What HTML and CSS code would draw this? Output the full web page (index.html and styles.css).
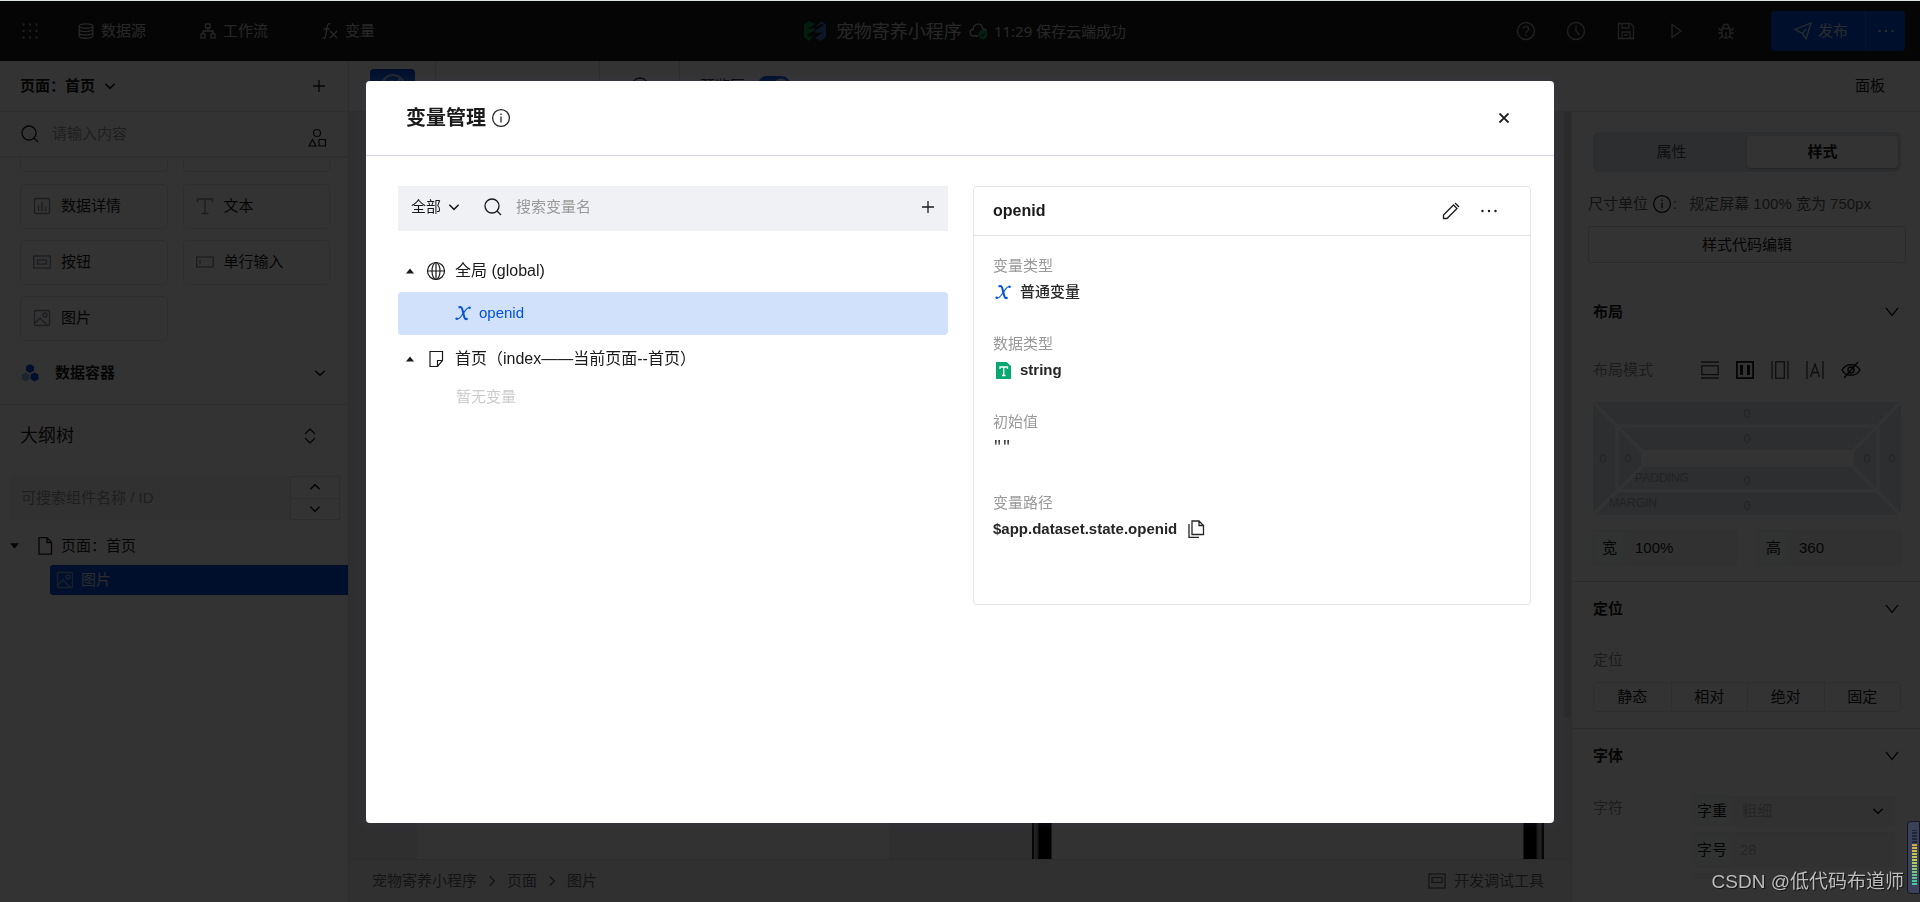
FILE: index.html
```html
<!DOCTYPE html>
<html lang="zh-CN">
<head>
<meta charset="utf-8">
<title>宠物寄养小程序 - 变量管理</title>
<link rel="stylesheet" href="styles.css">
</head>
<body>
<svg class="defs" width="0" height="0" aria-hidden="true">
  <symbol id="chev" viewBox="0 0 12 12"><path d="M2 4l4 4 4-4"/></symbol>
  <symbol id="wide-chev" viewBox="0 0 18 18"><path d="M3 5l6 7.500L15 5"/></symbol>
  <symbol id="plus" viewBox="0 0 14 14"><path d="M7 1v12M1 7h12"/></symbol>
  <symbol id="search" viewBox="0 0 18 18"><circle cx="8" cy="8" r="7"/><path d="M13 13l4 4"/></symbol>
  <symbol id="info" viewBox="0 0 20 20"><circle cx="10" cy="10" r="8.4"/><path d="M10 8.500v6M10 5.500v1.600"/></symbol>
  <symbol id="image" viewBox="0 0 18 18"><rect x="1.5" y="1.5" width="15" height="15" rx="1"/><circle cx="12" cy="6" r="2"/><path d="M2 14l5-5 7 7"/></symbol>
  <symbol id="varx" viewBox="0 0 18 18"><path d="M4.500 3.500C6.500 2.600 7.600 3 8.300 5.200L10.300 13c.6 2.400 1.600 2.800 3.200 1.200" stroke-width="2"/><path d="M16 3.600C14 3 13 3.800 11 6.800L7 12.500C5 15.200 4 15.600 2 14.800" stroke-width="1.200"/><circle cx="15.600" cy="3.800" r="1.200" fill="currentColor" stroke="none"/><circle cx="2.600" cy="14.600" r="1.200" fill="currentColor" stroke="none"/></symbol>
</svg>

<div class="app">
  <header class="topbar">
    <nav class="nav">
      <button class="nav-apps" aria-label="应用"><svg class="i18 dots" viewBox="0 0 18 18"><path d="M2.500 2.500h0M9 2.500h0M15.500 2.500h0M2.500 9h0M9 9h0M15.500 9h0M2.500 15.500h0M9 15.500h0M15.500 15.500h0"/></svg></button>
      <button class="nav-item"><svg class="i16" viewBox="0 0 16 16"><ellipse cx="8" cy="3" rx="6.800" ry="2.200"/><path d="M1.200 3v10c0 3 13.600 3 13.600 0V3M1.200 6.300c0 3 13.600 3 13.600 0M1.200 9.700c0 3 13.600 3 13.600 0"/></svg>数据源</button>
      <button class="nav-item"><svg class="i16" viewBox="0 0 16 16"><rect x="5.500" y="1" width="4.500" height="4"/><rect x="1" y="11" width="4" height="4"/><rect x="11" y="11" width="4" height="4"/><path d="M8 5v3M3 11V8h10v3"/></svg>工作流</button>
      <button class="nav-item"><svg class="i16" viewBox="0 0 16 16"><path d="M8.500 1C6.500 0 5.500 1.500 5.200 3.500L3.600 13c-.3 2-1.300 2.500-3 2M1.500 6h6M8 8l7 7M15 8l-7 7"/></svg>变量</button>
    </nav>
    <div class="project">
      <svg class="logo" viewBox="0 0 24 20"><path fill="#0a8f52" d="M1 4l5-4 6 3-8 5 7-1 1 2-8 5 2 2 5-2-5 6-5-4z"/><path fill="#3c6fc4" d="M23 4l-4-4-7 6 7-3 2 1-9 6 1 2 7-1-8 6 6 3 5-4z"/></svg>
      <span class="project-name">宠物寄养小程序</span>
      <svg class="cloud" viewBox="0 0 19 17"><path d="M9 13H5C0 13 0 7 4 6.500 5-.5 13-.5 14 6c2 0 3 1 3.500 2"/><circle cx="14" cy="11.500" r="4.500" fill="#0aa562" stroke="none"/><path d="M12 11.500l1.500 1.500 2.500-3" stroke="#111"/></svg>
      <span class="save-state">11:29 保存云端成功</span>
    </div>
    <div class="tools">
      <button aria-label="帮助"><svg class="i20" viewBox="0 0 20 20"><circle cx="10" cy="10" r="8.500"/><path d="M7.300 8c0-3.600 5.400-3.600 5.400 0 0 2-2.700 2-2.700 4M10 13.500v1.500"/></svg></button>
      <button aria-label="历史"><svg class="i20" viewBox="0 0 20 20"><circle cx="10" cy="10" r="8.500"/><path d="M10 4.500V10l3.500 4"/></svg></button>
      <button aria-label="保存"><svg class="i20" viewBox="0 0 20 20"><path d="M2.500 2.500h12l3 3v12h-15zM6 2.500v4.500h7V2.500M6 17.500V11h8v6.500M8 14h4"/></svg></button>
      <button aria-label="预览"><svg class="i20" viewBox="0 0 20 20"><path d="M6 3.500v13l9-6.500z"/></svg></button>
      <button aria-label="调试"><svg class="i20" viewBox="0 0 20 20"><path d="M6 7.500h8V13c0 5.500-8 5.500-8 0zM7 7c0-5 6-5 6 0M10 11v6M6 9H4L2.500 6.500M14 9h2l1.500-2.500M6 12H2M14 12h4M6.500 15L3 18M13.500 15l3.500 3"/></svg></button>
      <div class="publish">
        <button class="publish-main"><svg class="i18" viewBox="0 0 18 18"><path d="M1 7.500L17 1l-5 16-3.500-5.500zM8.500 11.500L12 7"/></svg>发布</button>
        <button class="publish-more" aria-label="更多"><svg class="i18 dots" viewBox="0 0 18 18"><path d="M2.500 9h0M9 9h0M15.500 9h0"/></svg></button>
      </div>
    </div>
  </header>

  <div class="main">
    <aside class="left">
      <div class="page-head"><button class="page-pick">页面：首页<svg class="i14"><use href="#chev"/></svg></button><button class="push" aria-label="新建页面"><svg class="i14"><use href="#plus"/></svg></button></div>
      <div class="comp-search">
        <svg class="i18"><use href="#search"/></svg>
        <input type="text" placeholder="请输入内容" aria-label="搜索组件">
        <svg class="i20 shapes" viewBox="0 0 20 20"><circle cx="10" cy="5" r="3.500"/><path d="M2 18l3.500-6.500L9 18zM12 11.500h6.500V18H12z"/></svg>
      </div>
      <div class="comp-list">
        <div class="comp-grid cut"><span></span><span></span></div>
        <div class="comp-grid">
          <button class="comp"><svg class="i18" viewBox="0 0 18 18"><rect x="1.500" y="1.500" width="15" height="15" rx="1"/><path d="M5.500 8v6M9 5v9M12.500 10v4"/></svg>数据详情</button>
          <button class="comp"><svg class="i18" viewBox="0 0 18 18"><path d="M1.500 5V2h15v3M9 2v14.500M5.500 16.500h7"/></svg>文本</button>
          <button class="comp"><svg class="i18" viewBox="0 0 18 18"><rect x=".7" y="3" width="16.600" height="12"/><rect x="4.500" y="7" width="9" height="4"/></svg>按钮</button>
          <button class="comp"><svg class="i18" viewBox="0 0 18 18"><rect x=".7" y="4" width="16.600" height="10"/><path d="M4 6.500v5"/></svg>单行输入</button>
          <button class="comp"><svg class="i18"><use href="#image"/></svg>图片</button>
        </div>
        <button class="comp-group"><svg class="i18" viewBox="0 0 18 18"><path fill="#0052d9" stroke="none" d="M9 0l4 2.300v4.400L9 9 5 6.700V2.300zM13.500 8.500l4 2v4.500l-4 2.500-4-2.500v-4.500z"/><path fill="#9db4dd" stroke="none" d="M4.500 8.500l4 2v4.500l-4 2.500-4-2.500v-4.500z"/></svg>数据容器<svg class="i14 push"><use href="#chev"/></svg></button>
      </div>
      <div class="outline">
        <div class="outline-head"><h2>大纲树</h2><button aria-label="展开收起"><svg class="i18" viewBox="0 0 18 18"><path d="M4 7l5-5 5 5M4 11l5 5 5-5"/></svg></button></div>
        <div class="outline-search">
          <input type="text" placeholder="可搜索组件名称 / ID" aria-label="搜索大纲树">
          <div class="steps"><button aria-label="上一个"><svg class="i14 up"><use href="#chev"/></svg></button><button aria-label="下一个"><svg class="i14"><use href="#chev"/></svg></button></div>
        </div>
        <div class="outline-page"><svg class="caret" viewBox="0 0 10 6"><path d="M0 0h10L5 6z"/></svg><svg class="i18" viewBox="0 0 18 18"><path d="M3 .7h8l4.500 4.500v12H3zM11 1v4.500h4"/></svg>页面：首页</div>
        <div class="outline-node"><svg class="i18"><use href="#image"/></svg>图片</div>
      </div>
    </aside>

    <div class="right-side">
      <div class="toolbar">
        <button class="tool-eye" aria-label="视图"><svg viewBox="0 0 26 26"><circle cx="13" cy="13" r="11"/><path d="M13 8a5 5 0 1 0 5 5M13 13l7-7"/></svg></button>
        <div class="tool-cell device">iPhone 8 100%</div>
        <div class="tool-cell ring"><svg class="i18" viewBox="0 0 18 18"><circle cx="9" cy="9" r="8"/></svg></div>
        <div class="preview"><label for="pv">预览区</label><input class="switch" type="checkbox" id="pv" checked></div>
        <button class="panel-btn">面板</button>
      </div>
      <div class="work">
        <div class="stage">
          <div class="canvas"><div class="artboard"></div><div class="phone"></div><div class="scroll-thumb"></div></div>
          <footer class="crumbs">
            <a href="#">宠物寄养小程序</a><svg class="i14 side"><use href="#chev"/></svg><a href="#">页面</a><svg class="i14 side"><use href="#chev"/></svg><a href="#">图片</a>
            <button class="dev"><svg class="i18" viewBox="0 0 18 18"><rect x="1" y="2" width="16" height="14"/><rect x="4" y="5.500" width="10" height="5"/></svg>开发调试工具</button>
          </footer>
        </div>

        <aside class="props">
          <div class="group first">
            <div class="tabs"><button>属性</button><button class="on">样式</button></div>
            <div class="unit"><span>尺寸单位</span><svg class="i20"><use href="#info"/></svg><span>:</span><span class="unit-text">规定屏幕 100% 宽为 750px</span></div>
            <button class="code-btn">样式代码编辑</button>
          </div>
          <section class="group layout">
            <h3>布局<svg class="i18"><use href="#wide-chev"/></svg></h3>
            <div class="modes"><span>布局模式</span>
              <svg class="i18" viewBox="0 0 18 18"><path d="M0 1h18M0 17h18"/><rect x=".8" y="4.800" width="16.400" height="8.800"/></svg>
              <svg class="i18 strong" viewBox="0 0 18 18"><rect x=".8" y=".8" width="16.400" height="16.400"/><path stroke-width="3" d="M5.500 4v10M12.500 4v10"/></svg>
              <svg class="i18" viewBox="0 0 18 18"><path d="M1 0v18M17 0v18"/><rect x="4.700" y=".8" width="8.600" height="16.400"/></svg>
              <svg class="i18" viewBox="0 0 18 18"><path d="M1 0v18M17 0v18M4.500 16L9 3l4.500 13M6 11.500h6"/></svg>
              <svg class="i20 hide-eye" viewBox="0 0 20 20"><path d="M1 10c4-7 14-7 18 0-4 7-14 7-18 0zM17 2L3 18"/><circle cx="10" cy="10" r="3"/></svg>
            </div>
            <svg class="box-model" viewBox="0 0 308 113" role="img" aria-label="外边距与内边距">
              <path class="zone" d="M0 0H308V113H0z"/>
              <path class="core" d="M48 48H261V65H48z"/>
              <path class="seam" d="M0 0L49 49M308 0L260 49M0 113L49 65M308 113L260 65M24 24H285V89H24z"/>
              <text x="154" y="16">0</text><text x="154" y="41">0</text><text x="154" y="83">0</text><text x="154" y="108">0</text>
              <text x="10" y="61">0</text><text x="35" y="61">0</text><text x="274" y="61">0</text><text x="299" y="61">0</text>
              <text x="69" y="80">PADDING</text><text x="40" y="105">MARGIN</text>
            </svg>
            <div class="sizes">
              <div class="field"><label for="w">宽</label><input id="w" type="text" value="100%"></div>
              <div class="field"><label for="h">高</label><input id="h" type="text" value="360"></div>
            </div>
          </section>
          <section class="group">
            <h3>定位<svg class="i18"><use href="#wide-chev"/></svg></h3>
            <div class="sub">定位</div>
            <div class="choices"><button>静态</button><button>相对</button><button>绝对</button><button>固定</button></div>
          </section>
          <section class="group">
            <h3>字体<svg class="i18"><use href="#wide-chev"/></svg></h3>
            <div class="font-row"><span>字符</span>
              <div class="font-fields">
                <div class="field short"><label for="fw">字重</label><select id="fw"><option>粗细</option></select><svg class="i14"><use href="#chev"/></svg></div>
                <div class="field"><label for="fs">字号</label><input id="fs" type="text" placeholder="28"></div>
                <div class="field rest"></div>
              </div>
            </div>
          </section>
        </aside>
      </div>
    </div>
  </div>
</div>

<div class="mask">
  <div class="modal" role="dialog" aria-labelledby="mt">
    <div class="modal-head"><h1 id="mt">变量管理</h1><svg class="i20"><use href="#info"/></svg><button class="push" aria-label="关闭"><svg class="i14 bold" viewBox="0 0 14 14"><path d="M2.500 2.500l9 9M11.500 2.500l-9 9"/></svg></button></div>
    <div class="modal-body">
      <div class="vars">
        <div class="var-search">
          <select aria-label="范围"><option>全部</option></select><svg class="i14"><use href="#chev"/></svg>
          <svg class="i18 glass"><use href="#search"/></svg>
          <input type="text" placeholder="搜索变量名" aria-label="搜索变量名">
          <button aria-label="新建变量"><svg class="i14"><use href="#plus"/></svg></button>
        </div>
        <div class="scope"><svg class="caret" viewBox="0 0 10 6"><path d="M0 6h10L5 0z"/></svg><svg class="i20" viewBox="0 0 20 20"><circle cx="10" cy="10" r="8.500"/><ellipse cx="10" cy="10" rx="4" ry="8.500"/><path d="M10 1.500v17M1.500 10h17"/></svg><span>全局 (global)</span></div>
        <div class="var on"><svg class="i18"><use href="#varx"/></svg>openid</div>
        <div class="scope"><svg class="caret" viewBox="0 0 10 6"><path d="M0 6h10L5 0z"/></svg><svg class="i20" viewBox="0 0 20 20"><path d="M4 2.500h12.500v9l-5 6H4zM16 11.500h-4.500v5.500"/></svg><span>首页（index——当前页面--首页）</span></div>
        <div class="none">暂无变量</div>
      </div>
      <div class="detail">
        <div class="detail-head"><h2>openid</h2>
          <button aria-label="编辑"><svg class="i18" viewBox="0 0 18 18"><path d="M1.500 16.500v-3.500L11.500 3l3.500 3.500L5 16.500zM13 1l4 4"/></svg></button>
          <button aria-label="更多"><svg class="i18 dots" viewBox="0 0 18 18"><path d="M2.500 9h0M9 9h0M15.500 9h0"/></svg></button>
        </div>
        <dl class="facts">
          <dt>变量类型</dt><dd><svg class="i18 blue"><use href="#varx"/></svg>普通变量</dd>
          <dt>数据类型</dt><dd class="strong-text"><svg class="i18" viewBox="0 0 18 18"><path fill="#07a872" stroke="none" d="M2 1h10.500L17 5v13H2z"/><path stroke="#fff" d="M6 8V6h7.500v2M9.750 6v8.500M8 14.500h3.500"/></svg>string</dd>
          <dt>初始值</dt><dd class="raw">""</dd>
          <dt>变量路径</dt><dd class="strong-text">$app.dataset.state.openid<button aria-label="复制"><svg class="i18" viewBox="0 0 18 18"><path d="M5 1h7l4.500 4.500V14.500H5zM12 1v4.500h4M2 4v13.500h10"/></svg></button></dd>
        </dl>
      </div>
    </div>
  </div>
</div>
<div class="watermark">CSDN @低代码布道师</div>
<div class="meter"><span></span></div>
</body>
</html>
```

FILE: styles.css
```css
* { box-sizing: border-box; }
body {
  margin: 0;
  font: 15px/24px "Liberation Sans", "Noto Sans CJK SC", sans-serif;
  color: #1a1a1a;
  background: #fff;
}
h1, h2, h3, dl, dd { margin: 0; }
button, input, select {
  font: inherit;
  color: inherit;
  background: none;
  border: 0;
  padding: 0;
  margin: 0;
  min-width: 0;
}
button { display: flex; align-items: center; }
a { color: inherit; text-decoration: none; }
select { appearance: none; opacity: 1; }
input::placeholder { color: #999; opacity: 1; }
svg { flex: none; fill: none; stroke: currentColor; stroke-width: 1.3; }
.defs { position: absolute; }
.i14 { width: 14px; height: 14px; }
.i16 { width: 16px; height: 16px; }
.i18 { width: 18px; height: 18px; }
.i20 { width: 20px; height: 20px; }
.bold { stroke-width: 1.8; }
.dots { stroke-width: 2.4; stroke-linecap: round; }
.up { transform: rotate(180deg); }
.side { transform: rotate(-90deg); }
.push { margin-left: auto; }
.caret { width: 9px; height: 6px; fill: currentColor; stroke: none; }

.app {
  display: flex;
  flex-direction: column;
  height: 100vh;
  border-top: 1px solid #dfe6e2;
  overflow: hidden;
}

/* top bar */
.topbar {
  display: grid;
  grid-template-columns: 1fr auto 1fr;
  align-items: center;
  flex: none;
  height: 60px;
  padding: 0 15px 0 21px;
  background: #1a1a1a;
  color: #c4c4c4;
}
.nav { display: flex; align-items: center; gap: 54px; }
.nav-apps { margin-right: -15px; color: #999; }
.nav-item { gap: 7px; }
.project { display: flex; align-items: center; padding-left: 3px; font-family: "Noto Sans", "Noto Sans CJK SC", sans-serif; }
.logo { width: 24px; height: 20px; stroke: none; margin-right: 9px; }
.project-name { font-size: 18px; }
.cloud { width: 19px; height: 17px; margin: 0 6px 0 7px; }
.tools { display: flex; align-items: center; justify-content: flex-end; gap: 30px; color: #a6a6a6; }
.publish { display: flex; height: 40px; margin-left: 5px; border-radius: 4px; background: #0052d9; color: #d0d8e8; }
.publish-main { gap: 6px; padding: 0 17px 0 23px; }
.publish-more { padding: 0 10px 0 11px; border-left: 1px solid #2a6be0; }

.main { display: grid; grid-template-columns: 349px minmax(0, 1fr); flex: 1; min-height: 0; }

/* component and outline panel */
.left { border-right: 1px solid #e0e0e0; background: #fff; }
.page-head { display: flex; align-items: center; height: 51px; padding: 0 22px 0 20px; border-bottom: 1px solid #e3e3e3; font-weight: bold; }
.page-pick { gap: 8px; }
.comp-search { display: flex; align-items: center; height: 46px; padding: 0 21px 0 21px; border-bottom: 2px solid #ebebeb; }
.comp-search input { flex: 1; margin: 0 13px; }
.shapes { align-self: flex-end; margin-bottom: 8px; stroke-width: 1.2; }
.comp-list { border-bottom: 1px solid #e3e3e3; }
.comp-grid { display: grid; grid-template-columns: 1fr 1fr; gap: 11px 15px; padding: 12px 18px 0 20px; }
.comp-grid.cut { padding-top: 0; }
.cut span { height: 14px; border: 1px solid #e6e6e6; border-top: 0; border-radius: 0 0 4px 4px; }
.comp { gap: 10px; height: 45px; padding: 0 12px 1px; border: 1px solid #e6e6e6; border-radius: 4px; }
.comp svg { color: #8b8f99; }
.comp-group { gap: 16px; width: 100%; height: 63px; padding: 0 21px; font-weight: bold; }
.outline-head { display: flex; align-items: center; justify-content: space-between; height: 62px; padding: 0 29px 0 20px; }
.outline-head h2 { font-size: 18px; font-weight: normal; }
.outline-search { display: flex; height: 44px; margin: 9px 8px 0 10px; }
.outline-search input { flex: 1; padding: 0 11px; background: #f3f3f3; border-radius: 4px 0 0 4px; }
.steps { display: grid; width: 50px; border: 1px solid #e0e0e0; }
.steps button { justify-content: center; }
.steps button + button { border-top: 1px solid #e0e0e0; }
.outline-page { display: flex; align-items: center; height: 30px; margin-top: 11px; padding-left: 10px; }
.outline-page .i18 { margin: 0 7px 0 17px; }
.outline-node { display: flex; align-items: center; gap: 7px; height: 30px; margin: 4px 0 0 50px; padding-left: 6px; border-radius: 3px 0 0 3px; background: #0052d9; color: #d9d9d9; }
.outline-node svg { color: #7f9fd6; }

/* stage */
.right-side { display: flex; flex-direction: column; min-height: 0; }
.toolbar { display: flex; align-items: center; flex: none; height: 51px; border-bottom: 1px solid #e3e3e3; background: #fff; }
.tool-eye { justify-content: center; width: 45px; height: 34px; margin: 0 20px 0 21px; border-radius: 4px; background: #0052d9; color: #a9bfe8; }
.tool-eye svg { width: 26px; height: 26px; stroke-width: 2; }
.tool-cell { display: flex; align-items: center; justify-content: center; height: 100%; border-left: 1px solid #ddd; }
.device { width: 164px; padding-right: 22px; font-family: "Noto Sans", sans-serif; }
.ring { width: 81px; border-right: 1px solid #ddd; }
.preview { display: flex; align-items: center; gap: 12px; padding-left: 20px; }
.switch { appearance: none; width: 34px; height: 20px; border-radius: 10px; background: radial-gradient(circle at 24px 10px, #d9d9d9 7px, #0052d9 8px); }
.panel-btn { margin-left: auto; padding: 0 35px; }
.work { display: grid; grid-template-columns: minmax(0, 1fr) 349px; flex: 1; min-height: 0; }
.stage { display: flex; flex-direction: column; min-height: 0; background: #f0f0f0; }
.canvas { display: flex; flex: 1; min-height: 0; padding-left: 68px; border-bottom: 1px solid #dcdcdc; background: #ececee; }
.artboard { width: 472px; background: #fafafa; }
.phone {
  width: 512px;
  margin-left: 143px;
  background: linear-gradient(90deg, #222 2px, #bbb 2px, #777 6px, #000 7px, #000 19px, #fafafa 20px, #fafafa 491px, #000 492px, #000 504px, #777 505px, #bbb 509px, #222 510px);
}
.scroll-thumb { width: 7px; height: 606px; margin-left: auto; border-radius: 4px; background: #d2d2d2; }
.crumbs { display: flex; align-items: center; gap: 8px; flex: none; height: 42px; padding: 0 27px 0 23px; color: #666; }
.dev { gap: 8px; margin-left: auto; }

/* style panel */
.props { border-left: 1px solid #e0e0e0; background: #fff; overflow: hidden; }
.group { padding: 15px 19px 16px 21px; border-bottom: 1px solid #d4d4d4; }
.group.first { padding-top: 20px; padding-bottom: 0; border: 0; }
.group.layout { padding-top: 37px; }
.group:last-child { border: 0; }
.tabs { display: grid; grid-template-columns: 1fr 1fr; height: 40px; padding: 4px 3px; border-radius: 6px; background: #dfe5eb; }
.tabs button { justify-content: center; border-radius: 4px; color: #4d4d4d; }
.tabs .on { background: #fff; color: #1a1a1a; font-weight: bold; box-shadow: 0 1px 2px #b0b0b0; }
.unit { display: flex; align-items: center; margin: 20px 0 10px -5px; gap: 4px; white-space: nowrap; }
.unit span { color: #595959; }
.unit svg + span { margin-left: -3px; }
.unit .unit-text { margin-left: 8px; }
.code-btn { justify-content: center; width: calc(100% + 10px); height: 37px; margin: 0 -5px; border: 1px solid #d4d4d4; border-radius: 3px; }
.group h3 { display: flex; align-items: center; justify-content: space-between; font-size: 15px; }
.modes { display: flex; align-items: center; gap: 17px; margin-top: 34px; color: #444; }
.modes span { margin-right: 31px; color: #8c8c8c; }
.strong { color: #1a1a1a; stroke-width: 2; }
.hide-eye { color: #1a1a1a; stroke-width: 1.5; }
.box-model { display: block; width: 100%; margin-top: 20px; stroke: none; }
.zone { fill: #dbe7ef; }
.core { fill: #fff; }
.seam { stroke: #fff; stroke-width: 3; }
.box-model text { font-size: 12px; fill: #a8b0b6; text-anchor: middle; }
.sizes { display: grid; grid-template-columns: 1fr 1fr; gap: 20px; margin-top: 15px; }
.field { display: flex; align-items: center; height: 35px; border: 1px solid #e9edec; background: #f3f3f3; }
.field label { display: flex; align-items: center; justify-content: center; align-self: stretch; flex: none; width: 31px; background: #f6faf9; }
.field input, .field select { flex: 1; width: 0; padding-left: 10px; }
.sub { margin-top: 27px; color: #8c8c8c; }
.choices { display: grid; grid-template-columns: repeat(4, 1fr); height: 30px; margin-top: 10px; border: 1px solid #e6e6e6; border-radius: 3px; }
.choices button { justify-content: center; }
.choices button + button { border-left: 1px solid #e6e6e6; }
.font-row { display: flex; justify-content: space-between; margin-top: 28px; padding-right: 6px; color: #8c8c8c; }
.font-fields { display: grid; gap: 6px; width: 202px; color: #1a1a1a; }
.font-fields label { width: 36px; }
.field.short { height: 30px; padding-right: 9px; }
.field.rest { width: 37px; height: 6px; border-bottom: 0; }
.field select { color: #bbb; padding-left: 12px; }
.font-fields input::placeholder { color: #bbb; }

/* dialog */
.mask { position: fixed; inset: 1px 0 0; display: flex; align-items: center; justify-content: center; background: rgba(0, 0, 0, .8); }
.modal { width: 90%; max-width: 1188px; height: calc(100vh - 160px); border-radius: 4px; background: #fff; box-shadow: 0 0 12px rgba(60, 60, 110, .25); }
.modal-head { display: flex; align-items: center; gap: 5px; height: 75px; padding: 0 43px 0 40px; border-bottom: 1px solid #d8d9e4; }
.modal-head h1 { font-size: 20px; }
.modal-head svg { color: #262626; }
.modal-body { display: grid; grid-template-columns: 550fr 558fr; align-items: start; gap: 25px; padding: 30px 23px 0 32px; }
.var-search { display: flex; align-items: center; height: 45px; padding: 0 13px 2px; margin-bottom: 21px; background: #f0f1f5; }
.var-search select { width: 36px; }
.var-search .glass { margin: 0 14px 0 23px; }
.var-search input { flex: 1; }
.scope { display: flex; align-items: center; height: 38px; padding-left: 8px; font-size: 16px; }
.scope .i20 { margin: 0 9px 0 12px; }
.scope svg { stroke-width: 1.2; }
.scope .caret { width: 8px; }
.var { display: flex; align-items: center; gap: 7px; height: 43px; margin: 2px 0 5px; padding-left: 56px; border-radius: 4px; }
.var.on { background: #d2e1fb; color: #0052d9; }
.none { padding: 7px 0 0 58px; color: #ccc; }
.detail { min-height: 419px; border: 1px solid #e1e4ea; border-radius: 4px; }
.detail-head { display: flex; align-items: center; gap: 20px; height: 49px; padding: 0 32px 0 19px; border-bottom: 1px solid #e1e4ea; }
.detail-head h2 { flex: 1; font-size: 16px; }
.facts { padding: 18px 19px; }
.facts dt { color: #999; }
.facts dd { display: flex; align-items: center; gap: 8px; height: 29px; margin-bottom: 25px; font-weight: 500; color: #262626; }
.facts dd > svg { margin-left: 1px; }
.facts .strong-text { font-weight: bold; }
.facts .raw { margin-bottom: 28px; font-family: "Liberation Mono", monospace; font-weight: normal; }
.facts button { margin-left: 2px; }
.blue { color: #0052d9; }

/* desktop overlays */
.watermark { position: fixed; right: 16px; bottom: 6px; font-size: 19px; line-height: 28px; color: #bdbdbd; text-shadow: 1px 1px 1px #111; }
.meter { position: fixed; right: 0; bottom: 8px; width: 13px; height: 73px; padding: 8px 2px 7px 4px; border: 1px solid #14161f; border-radius: 4px 0 0 4px; background: #3b4158; }
.meter span { display: block; height: 100%; background: repeating-linear-gradient(0deg, #3b4158 0 1px, transparent 1px 3px), linear-gradient(#20263a 25%, #e0b040 26%, #b9cf50 55%, #46c79a 90%); }
```
